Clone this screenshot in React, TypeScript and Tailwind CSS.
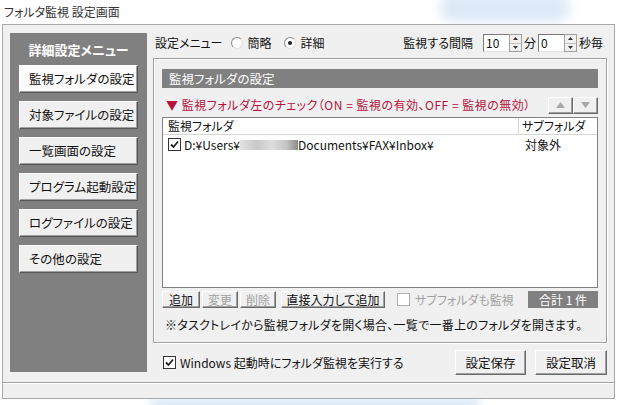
const btn =
  "flex items-center justify-center whitespace-nowrap bg-[#f0f0f0] border border-t-white border-l-white border-r-[#696969] border-b-[#696969] shadow-[inset_-1px_-1px_0_#a0a0a0]";

const menu = ["監視フォルダの設定", "対象ファイルの設定", "一覧画面の設定", "プログラム起動設定", "ログファイルの設定", "その他の設定"];

function Check({ on, disabled }: { on?: boolean; disabled?: boolean }) {
  return (
    <span
      className={
        "flex h-[13px] w-[13px] shrink-0 items-center justify-center border bg-white " +
        (disabled ? "border-[#b0b0b0]" : "border-[#333]")
      }
    >
      {on && (
        <svg width="9" height="9" viewBox="0 0 9 9">
          <path d="M1 4.5 L3.5 7 L8 1.5" fill="none" stroke="#222" strokeWidth="1.8" />
        </svg>
      )}
    </span>
  );
}

function Radio({ on }: { on?: boolean }) {
  return (
    <span className="flex h-[12px] w-[12px] items-center justify-center rounded-full border border-[#8a8a8a] border-r-[#e0e0e0] border-b-[#e0e0e0] bg-white">
      {on && <span className="h-[4px] w-[4px] rounded-full bg-[#222]" />}
    </span>
  );
}

function Spin({ value }: { value: string }) {
  return (
    <div className="flex h-[18px]">
      <div className="flex w-[26px] items-center border border-[#7a7a7a] border-r-0 border-b-[#e3e3e3] bg-white pl-[2px] text-[12px] leading-none">
        {value}
      </div>
      <div className="flex w-[13px] flex-col border border-[#a0a0a0] bg-[#f0f0f0]">
        <div className="flex flex-1 items-center justify-center border-b border-[#c0c0c0]">
          <svg width="5" height="3" viewBox="0 0 5 3"><path d="M2.5 0 L5 3 L0 3Z" fill="#333" /></svg>
        </div>
        <div className="flex flex-1 items-center justify-center">
          <svg width="5" height="3" viewBox="0 0 5 3"><path d="M0 0 L5 0 L2.5 3Z" fill="#333" /></svg>
        </div>
      </div>
    </div>
  );
}

export default function App() {
  return (
    <div className="relative h-[405px] w-[617px] overflow-hidden whitespace-nowrap bg-white font-['Noto_Sans_CJK_JP','Liberation_Sans',sans-serif] text-[12px] leading-[14px] text-[#111] [font-feature-settings:'palt']">
      <div className="pointer-events-none absolute left-[440px] top-[-6px] h-[28px] w-[130px] rounded-full bg-[#dde9f7] blur-[6px]" />
      <div className="pointer-events-none absolute bottom-[-4px] left-[150px] h-[10px] w-[330px] rounded-full bg-[#d6e6f6] blur-[4px]" />
      <div className="relative flex h-[24px] items-center pl-[4px] text-[12px] text-[#333]">フォルタ監視 設定画面</div>

      <div className="relative ml-[2px] flex h-[375px] w-[613px] flex-col border border-[#a9a9a9] bg-[#f0f0f0]">
        <div className="flex flex-1 pl-[7px] pt-[8px]">
          {/* left menu */}
          <div className="flex h-[339px] w-[137px] flex-col items-center bg-[#808080]">
            <div className="pt-[10px] pb-[8px] text-[13px] font-bold text-white">詳細設定メニュー</div>
            <div className="flex flex-col gap-[8px]">
              {menu.map((m, i) => (
                <div
                  key={m}
                  className={
                    "flex h-[28px] w-[119px] items-center pl-[9px] text-[12.5px] border border-t-white border-l-white border-r-[#555] border-b-[#555] shadow-[inset_-1px_-1px_0_#a0a0a0] " +
                    (i === 0 ? "bg-[#fbfbfb]" : "bg-[#f0f0f0]")
                  }
                >
                  {m}
                </div>
              ))}
            </div>
          </div>

          {/* right content */}
          <div className="ml-[6px] flex w-[454px] flex-col">
            <div className="flex h-[20px] items-center">
              <span className="ml-[2px]">設定メニュー</span>
              <span className="ml-[8px]"><Radio /></span>
              <span className="ml-[5px]">簡略</span>
              <span className="ml-[12px]"><Radio on /></span>
              <span className="ml-[5px]">詳細</span>
              <span className="ml-auto mr-[10px]">監視する間隔</span>
              <Spin value="10" />
              <span className="mx-[2px]">分</span>
              <Spin value="0" />
              <span className="ml-[2px] mr-[4px]">秒毎</span>
            </div>

            {/* group box */}
            <div className="mt-[5px] flex h-[285px] flex-col border border-[#a0a0a0] px-[8px] pt-[10px] shadow-[inset_1px_1px_0_#fff,1px_1px_0_#fff]">
              <div className="flex h-[19px] items-center bg-[#808080] pl-[7px] text-[12.5px] text-white">監視フォルダの設定</div>
              <div className="mt-[8px] flex h-[18px] items-center">
                <span className="ml-[4px] text-[12px] tracking-[0.5px] text-[#b4123c]">▼ 監視フォルダ左のチェック（ON = 監視の有効、OFF = 監視の無効）</span>
                <div className="ml-auto flex">
                  <div className={btn + " h-[17px] w-[25px]"}>
                    <svg width="9" height="6" viewBox="0 0 9 6"><path d="M4.5 0 L9 6 L0 6Z" fill="#a8a8a8" /></svg>
                  </div>
                  <div className={btn + " h-[17px] w-[25px]"}>
                    <svg width="9" height="6" viewBox="0 0 9 6"><path d="M0 0 L9 0 L4.5 6Z" fill="#a8a8a8" /></svg>
                  </div>
                </div>
              </div>

              {/* list */}
              <div className="mt-[3px] flex h-[171px] flex-col border border-[#828282] bg-white">
                <div className="flex h-[17px] border-b border-[#d5d5d5]">
                  <div className="flex flex-1 items-center border-r border-[#d5d5d5] pl-[5px]">監視フォルダ</div>
                  <div className="flex w-[78px] items-center pl-[3px]">サブフォルダ</div>
                </div>
                <div className="flex h-[19px] items-center">
                  <div className="flex flex-1 items-center pl-[5px]">
                    <Check on />
                    <span className="ml-[3px]">D:¥Users¥</span>
                    <span className="inline-block h-[10px] w-[58px] bg-[linear-gradient(90deg,#e2e2e2,#c8c8c8_30%,#dedede_55%,#c4c4c4_80%,#8a8a8a)] blur-[0.6px]" />
                    <span>Documents¥FAX¥Inbox¥</span>
                  </div>
                  <div className="w-[78px] pl-[6px]">対象外</div>
                </div>
              </div>

              {/* buttons row */}
              <div className="mt-[3px] flex h-[17px] items-center">
                <div className={btn + " h-[17px] w-[38px]"}>追加</div>
                <div className={btn + " ml-[2px] h-[17px] w-[36px] text-[#a0a0a0]"}>変更</div>
                <div className={btn + " ml-[2px] h-[17px] w-[36px] text-[#a0a0a0]"}>削除</div>
                <div className={btn + " ml-[5px] h-[17px] w-[104px]"}>直接入力して追加</div>
                <span className="ml-[12px]"><Check disabled /></span>
                <span className="ml-[5px] text-[#a0a0a0]">サブフォルダも監視</span>
                <div className="ml-auto flex h-[17px] w-[70px] items-center justify-center bg-[#808080] text-white">合計 1 件</div>
              </div>

              <div className="mt-[10px] pl-[3px] tracking-[0.25px]">※タスクトレイから監視フォルダを開く場合、一覧で一番上のフォルダを開きます。</div>
            </div>

            {/* bottom row */}
            <div className="mt-[7px] flex h-[25px] items-center">
              <span className="ml-[10px]"><Check on /></span>
              <span className="ml-[4px]">Windows 起動時にフォルダ監視を実行する</span>
              <div className={btn + " ml-auto h-[25px] w-[71px] text-[12.5px]"}>設定保存</div>
              <div className={btn + " ml-[9px] h-[25px] w-[72px] text-[12.5px]"}>設定取消</div>
            </div>
          </div>
        </div>
        <div className="h-[16px] border-t border-[#a0a0a0] shadow-[inset_0_1px_0_#fff]" />
      </div>
    </div>
  );
}
